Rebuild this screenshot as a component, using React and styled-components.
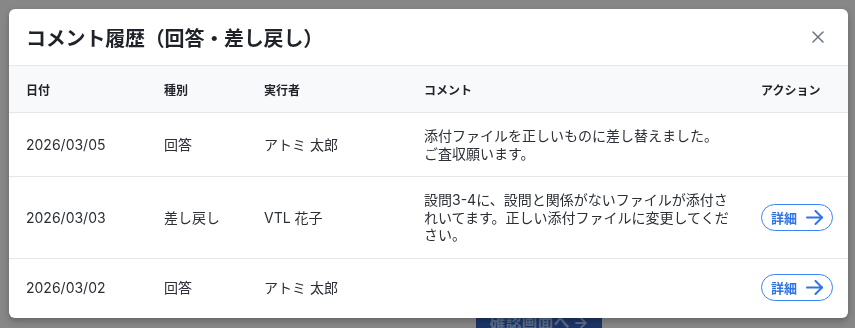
import React from 'react';
import styled, { createGlobalStyle } from 'styled-components';
import { X } from 'lucide-react';

const GlobalStyle = createGlobalStyle`
  html, body {
    margin: 0;
    padding: 0;
    height: 100%;
    font-family: Inter, "Noto Sans CJK JP", sans-serif;
  }
  #root {
    height: 100%;
  }
`;

const history = [
  {
    date: '2026/03/05',
    type: '回答',
    actor: 'アトミ 太郎',
    comment: '添付ファイルを正しいものに差し替えました。\nご査収願います。',
    detail: false
  },
  {
    date: '2026/03/03',
    type: '差し戻し',
    actor: 'VTL 花子',
    comment: '設問3-4に、設問と関係がないファイルが添付されいてます。正しい添付ファイルに変更してください。',
    detail: true
  },
  {
    date: '2026/03/02',
    type: '回答',
    actor: 'アトミ 太郎',
    comment: '',
    detail: true
  }
];

// 詳細ボタンの矢印
const Arrow = () => (
  <svg width="17" height="15" viewBox="0 0 17 15" fill="none" stroke="currentColor"
    strokeWidth="2" strokeLinecap="round" strokeLinejoin="round">
    <path d="M1 7.5h15" />
    <path d="M9.5 1l6.5 6.5-6.5 6.5" />
  </svg>
);

export default function App() {
  return (
    <>
      <GlobalStyle />
      <Page>
        <PageBody />
        <Footer>
          <ConfirmButton>確認画面へ →</ConfirmButton>
        </Footer>
      </Page>

      <Overlay>
        <Modal>
          <ModalHeader>
            <Title>コメント履歴（回答・差し戻し）</Title>
            <CloseButton aria-label="閉じる">
              <X size={20} strokeWidth={1.8} />
            </CloseButton>
          </ModalHeader>

          <Table>
            <HeadRow>
              <HeadCell>日付</HeadCell>
              <HeadCell>種別</HeadCell>
              <HeadCell>実行者</HeadCell>
              <HeadCell>コメント</HeadCell>
              <HeadCell>アクション</HeadCell>
            </HeadRow>

            {history.map((item) => (
              <Row key={item.date}>
                <Cell>{item.date}</Cell>
                <Cell>{item.type}</Cell>
                <Cell>{item.actor}</Cell>
                <CommentCell>{item.comment}</CommentCell>
                <Cell>
                  {item.detail && (
                    <DetailButton>
                      詳細
                      <Arrow />
                    </DetailButton>
                  )}
                </Cell>
              </Row>
            ))}
          </Table>
        </Modal>
      </Overlay>
    </>
  );
}

const Page = styled.div`
  height: 100%;
  display: flex;
  flex-direction: column;
  background: #878787;
`;

const PageBody = styled.div`
  flex: 1;
`;

const Footer = styled.div`
  display: flex;
  justify-content: center;
  padding: 0 0 0 223px;
  height: 10px;
  overflow: hidden;
`;

const ConfirmButton = styled.div`
  width: 126px;
  height: 36px;
  background: #1c3566;
  color: #5a6a88;
  font-size: 16px;
  font-weight: 700;
  display: flex;
  align-items: flex-start;
  justify-content: center;
  line-height: 16px;
  margin-top: -4px;
`;

const Overlay = styled.div`
  position: fixed;
  inset: 0;
  padding: 9px 7px 10px 9px;
  display: flex;
  align-items: flex-start;
`;

const Modal = styled.div`
  flex: 1;
  height: 309px;
  background: #fff;
  border-radius: 6px;
  overflow: hidden;
  box-shadow: 0 3px 6px rgba(0, 0, 0, 0.25);
  display: flex;
  flex-direction: column;
`;

const ModalHeader = styled.div`
  height: 56px;
  flex-shrink: 0;
  display: flex;
  align-items: center;
  justify-content: space-between;
  padding: 0 20px 0 17px;
  border-bottom: 1px solid #e5e7eb;
`;

const Title = styled.h2`
  margin: 0;
  font-size: 20px;
  font-weight: 700;
  color: #1f2329;
  letter-spacing: -0.2px;
`;

const CloseButton = styled.button`
  border: none;
  background: none;
  padding: 0;
  display: flex;
  color: #6b7280;
  cursor: pointer;
`;

const Table = styled.div`
  display: grid;
  grid-template-columns: 139px 100px 160px 337px 1fr;
`;

const HeadRow = styled.div`
  display: contents;
`;

const HeadCell = styled.div`
  height: 46px;
  display: flex;
  align-items: center;
  padding-left: 16px;
  background: #f8f9fa;
  border-bottom: 1px solid #e5e7eb;
  font-size: 12px;
  font-weight: 700;
  color: #1f2329;

  &:first-child {
    padding-left: 17px;
  }
`;

const Row = styled.div`
  display: contents;

  &:last-child > div {
    border-bottom: none;
  }
`;

const Cell = styled.div`
  min-height: 58px;
  box-sizing: border-box;
  display: flex;
  align-items: center;
  padding: 14px 0 14px 16px;
  border-bottom: 1px solid #e5e7eb;
  font-size: 14px;
  color: #2b2f36;
  line-height: 1.25;

  &:first-child {
    padding-left: 17px;
  }
`;

const CommentCell = styled(Cell)`
  padding-right: 8px;
  white-space: pre-line;
`;

const DetailButton = styled.button`
  display: flex;
  align-items: center;
  gap: 9px;
  height: 27px;
  padding: 0 9px 0 9px;
  border: 1px solid #3b82f6;
  border-radius: 14px;
  background: #fff;
  color: #2f74e6;
  font-family: inherit;
  font-size: 13px;
  font-weight: 700;
  cursor: pointer;
`;
